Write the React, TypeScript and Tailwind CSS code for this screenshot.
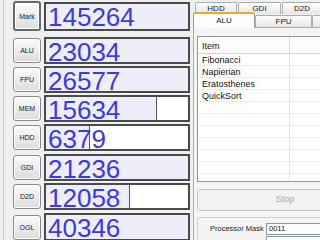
import React from 'react';

type Row = { label: string; value: string; fill: number | null; mt: string; bh: string; def?: boolean };

const rows: Row[] = [
  { label: 'Mark', value: '145264', fill: null, mt: 'mt-[1px]', bh: 'h-[29px]', def: true },
  { label: 'ALU', value: '23034', fill: null, mt: 'mt-[6px]', bh: 'h-[27px]' },
  { label: 'FPU', value: '26577', fill: null, mt: 'mt-[2px]', bh: 'h-[27px]' },
  { label: 'MEM', value: '15634', fill: 111, mt: 'mt-[2px]', bh: 'h-[27px]' },
  { label: 'HDD', value: '6379', fill: 44, mt: 'mt-[2px]', bh: 'h-[27px]' },
  { label: 'GDI', value: '21236', fill: null, mt: 'mt-[3px]', bh: 'h-[27px]' },
  { label: 'D2D', value: '12058', fill: 84, mt: 'mt-[2px]', bh: 'h-[27px]' },
  { label: 'OGL', value: '40346', fill: null, mt: 'mt-[3px]', bh: 'h-[28px]' },
];

function Tab({ label, w, sel }: { label: string; w: string; sel?: boolean }) {
  return (
    <div
      className={
        'flex items-center justify-center shrink-0 rounded-t-[2px] border border-b-0 text-[8px] leading-none text-[#222] ' +
        w +
        (sel
          ? ' h-[16px] border-[#919b9c] border-t-2 border-t-[#f5a623] bg-[#fcfcfe] -mb-px relative z-10'
          : ' h-[12px] border-[#a8aeb0] bg-gradient-to-b from-[#fefefe] to-[#e6e6e2]')
      }
    >
      {label}
    </div>
  );
}

export default function App() {
  return (
    <div
      className="w-[320px] h-[240px] overflow-hidden bg-[#f0f0f0] flex"
      style={{ fontFamily: '"Liberation Sans", Arial, sans-serif' }}
    >
      {/* Left panel */}
      <div className="w-[193px] shrink-0 h-full pl-[3px] flex">
        <div className="border-l border-[#c8c8c8] h-full w-full flex flex-col">
          {rows.map((r) => (
            <div key={r.label} className={'flex items-center ' + r.mt}>
              <div
                className={
                  'ml-[9px] w-[28px] flex items-center justify-center rounded-[3px] bg-gradient-to-b from-[#fbfbfb] to-[#dcdcdc] text-[7px] text-[#222] leading-none ' +
                  (r.def
                    ? 'h-[30px] border-2 border-[#6a6a6a] shadow-[inset_0_0_0_1px_#ffffff]'
                    : 'h-[25px] border border-[#8a8a8a] shadow-[inset_0_0_0_1px_#ffffff]')
                }
              >
                {r.label}
              </div>
              <div
                className={
                  'ml-[3px] w-[146px] border-2 border-[#4a4a4a] bg-white relative flex items-center ' +
                  r.bh
                }
              >
                {r.fill === null ? (
                  <div className="absolute inset-0 bg-[#eeeefa]" />
                ) : (
                  <div
                    className="absolute left-0 top-0 bottom-0 bg-[#eeeefa] border-r border-[#555]"
                    style={{ width: r.fill }}
                  />
                )}
                <span className="relative top-[1px] pl-[2px] text-[26px] leading-[22px] text-[#3a3ae0]">{r.value}</span>
              </div>
            </div>
          ))}
        </div>
      </div>

      {/* Right panel */}
      <div className="w-[180px] shrink-0 h-full flex flex-col">
        {/* Tab headers */}
        <div className="flex flex-col h-[28px]">
          <div className="flex gap-[1px] pl-[2px] mt-[2px]">
            <Tab label="HDD" w="w-[42px]" />
            <Tab label="GDI" w="w-[43px]" />
            <Tab label="D2D" w="w-[40px]" />
          </div>
          <div className="flex items-end -mt-[2px]">
            <Tab label="ALU" w="w-[62px]" sel />
            <Tab label="FPU" w="w-[57px]" />
            <Tab label="" w="w-[50px]" />
          </div>
        </div>
        {/* Tab page */}
        <div className="flex-1 border-l border-t border-[#a8aeb0] bg-[#f4f4f2] flex flex-col pl-[3px]">
          <div className="mt-[8px] h-[146px] border border-[#8a99a6] bg-white flex flex-col text-[9px] text-[#111] leading-none overflow-hidden">
            <div className="flex h-[17px] shrink-0 border-b border-[#d6d6d6] bg-white">
              <div className="w-[92px] border-r border-[#d6d6d6] pl-[4px] flex items-center pt-[3px]">Item</div>
              <div className="flex-1" />
            </div>
            {['Fibonacci', 'Napierian', 'Eratosthenes', 'QuickSort', '', '', '', '', '', '', ''].map((t, i) => (
              <div key={i} className="flex h-[12px] shrink-0 border-b border-[#ececec]">
                <div className="w-[92px] border-r border-[#e4e4e4] pl-[4px] flex items-center pt-[1px]">{t}</div>
                <div className="flex-1" />
              </div>
            ))}
          </div>
          <div className="mt-[7px] h-[22px] w-[176px] rounded-[3px] border border-[#c4c4c4] bg-[#f2f2f2] flex items-center justify-center text-[9px] text-[#a8a8a8]">
            Stop
          </div>
          <div className="mt-[6px] flex-1 border-l border-t border-[#d0d0d0] rounded-tl-[3px] flex flex-col">
            <div className="flex items-center mt-[5px]">
              <span className="ml-[12px] text-[7.5px] leading-none text-[#222] w-[56px] whitespace-nowrap">Processor Mask</span>
              <div className="h-[12px] w-[60px] border border-[#8a99a6] bg-white text-[7.5px] leading-none text-[#111] pl-[2px] flex items-center">0011</div>
            </div>
            <div className="ml-[68px] mt-[1px] h-[12px] w-[60px] border border-[#8a99a6] bg-white" />
          </div>
        </div>
      </div>
    </div>
  );
}
